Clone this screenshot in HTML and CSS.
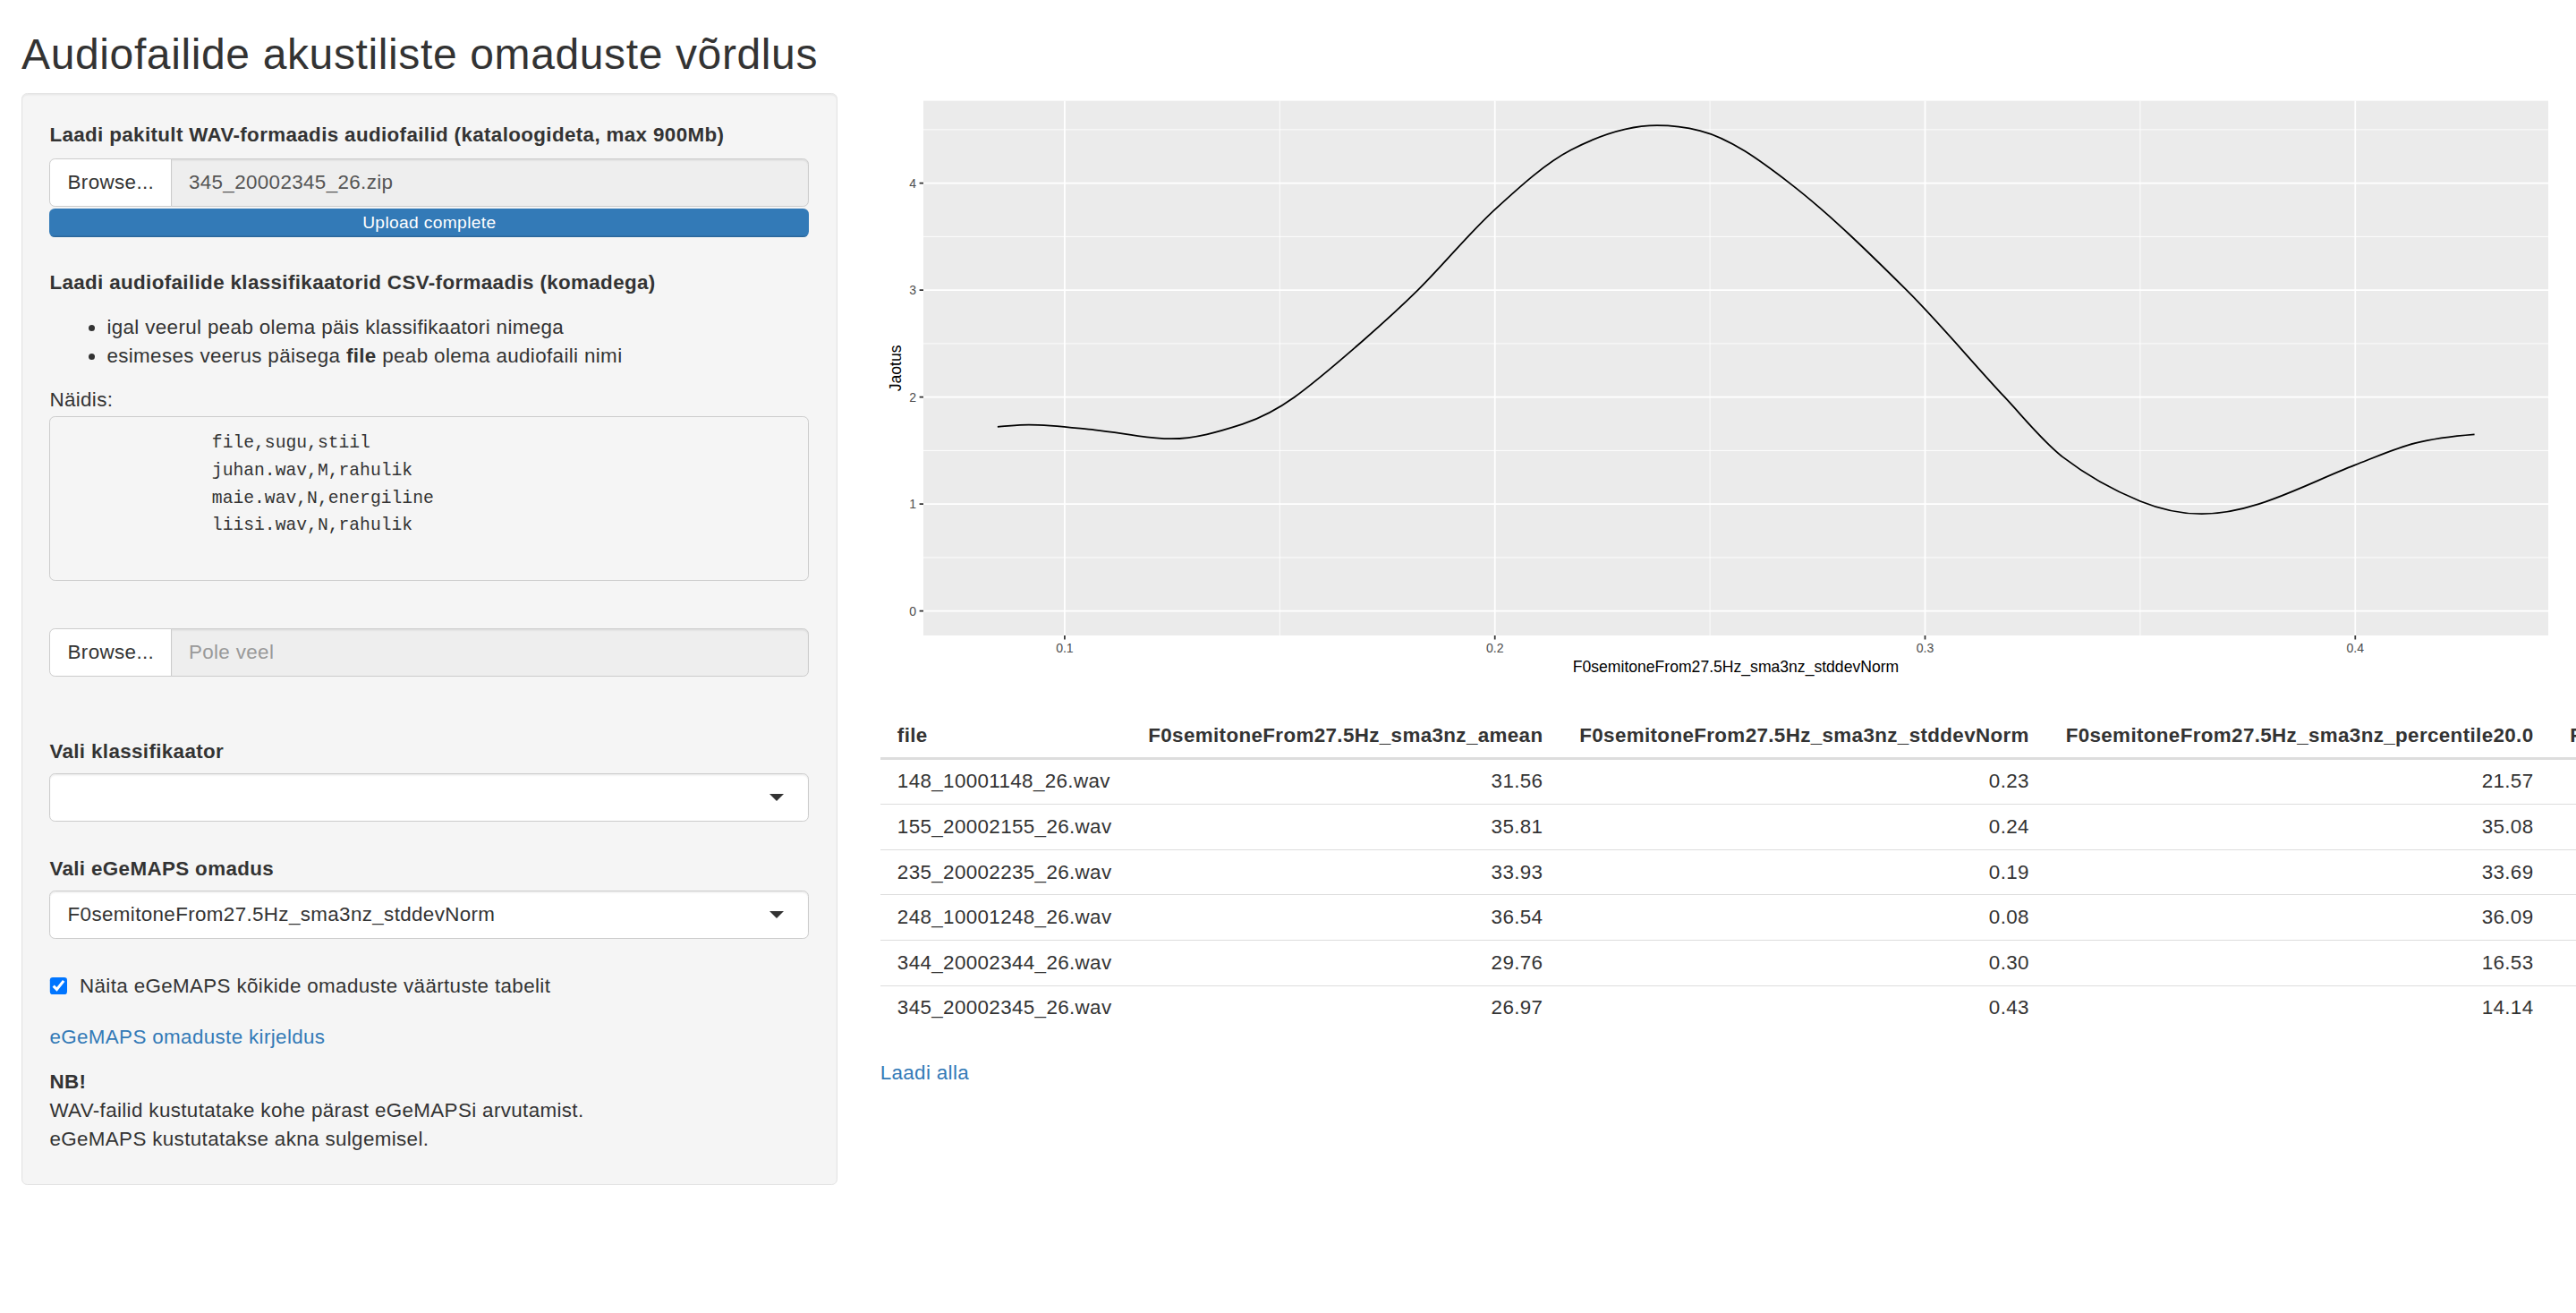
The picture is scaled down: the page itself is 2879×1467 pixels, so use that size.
FILE: index.html
```html
<!DOCTYPE html>
<html lang="et">
<head>
<meta charset="utf-8">
<title>Audiofailide akustiliste omaduste võrdlus</title>
<link rel="stylesheet" href="styles.css">
</head>
<body>
<div class="container-fluid">
  <h2 class="page-title">Audiofailide akustiliste omaduste võrdlus</h2>
  <div class="row">
    <div class="sidebar">
      <form class="well">
        <div class="form-group fg-file1">
          <label class="control-label file-label">Laadi pakitult WAV-formaadis audiofailid (kataloogideta, max 900Mb)</label>
          <div class="input-group">
            <span class="btn-file">Browse...</span>
            <input type="text" class="file-name" value="345_20002345_26.zip" readonly>
          </div>
          <div class="progress"><div class="progress-bar">Upload complete</div></div>
        </div>

        <div class="form-group fg-file2">
          <div class="csv-label">
            <p class="strong-label">Laadi audiofailide klassifikaatorid CSV-formaadis (komadega)</p>
            <ul class="rules">
              <li>igal veerul peab olema päis klassifikaatori nimega</li>
              <li>esimeses veerus päisega <b>file</b> peab olema audiofaili nimi</li>
            </ul>
            <div class="sample-label">Näidis:</div>
<pre class="sample">              file,sugu,stiil
              juhan.wav,M,rahulik
              maie.wav,N,energiline
              liisi.wav,N,rahulik
              </pre>
          </div>
          <div class="input-group">
            <span class="btn-file">Browse...</span>
            <input type="text" class="file-name" placeholder="Pole veel" readonly>
          </div>
          <div class="progress progress-hidden"><div class="progress-bar"></div></div>
        </div>

        <div class="form-group fg-select">
          <label class="control-label">Vali klassifikaator</label>
          <div class="select-box">
            <span class="select-value"></span>
            <span class="caret"></span>
          </div>
        </div>

        <div class="form-group fg-select">
          <label class="control-label">Vali eGeMAPS omadus</label>
          <div class="select-box">
            <span class="select-value">F0semitoneFrom27.5Hz_sma3nz_stddevNorm</span>
            <span class="caret"></span>
          </div>
        </div>

        <div class="checkbox">
          <label><input type="checkbox" checked><span>Näita eGeMAPS kõikide omaduste väärtuste tabelit</span></label>
        </div>

        <a class="desc-link" href="#">eGeMAPS omaduste kirjeldus</a>

        <div class="note">
          <b>NB!</b><br>
          WAV-failid kustutatake kohe pärast eGeMAPSi arvutamist.<br>
          eGeMAPS kustutatakse akna sulgemisel.
        </div>
      </form>
    </div>

    <div class="main-panel">
      <div class="plot">
        <svg class="plot-svg" viewBox="0 0 1169.6 414" width="100%" height="414">
          <rect x="30" y="5.4" width="1135" height="373.35" fill="#EBEBEB"/>
          <path d="M30 324.35H1165 M30 249.65H1165 M30 174.95H1165 M30 100.25H1165 M30 25.55H1165 M278.95 5.4V378.75 M579.45 5.4V378.75 M879.95 5.4V378.75" stroke="#FFFFFF" stroke-width="0.55" fill="none"/>
          <path d="M30 361.7H1165 M30 287H1165 M30 212.3H1165 M30 137.6H1165 M30 62.9H1165 M128.7 5.4V378.75 M429.2 5.4V378.75 M729.7 5.4V378.75 M1030.2 5.4V378.75" stroke="#FFFFFF" stroke-width="1.1" fill="none"/>
          <path d="M81.8 233.1 C89.07 232.6 96.33 231.6 103.6 231.6 C118.93 231.6 134.27 233.69 149.6 235.2 C167.43 236.96 185.27 241.4 203.1 241.4 C219.7 241.4 236.2 236.6 252.9 231.2 C265 227.1 277.1 221.0 289.2 212.3 C303.8 201.8 318.4 189.06 333 176.4 C347.13 164.15 361.27 151.57 375.4 137.6 C393.33 119.87 411.27 97.71 429.2 81.3 C446.93 65.08 464.67 48.88 482.4 39.7 C502.43 29.32 522.47 22.6 542.5 22.6 C552.5 22.6 562.5 23.8 572.5 26.3 C593.37 31.52 614.23 46.81 635.1 62.9 C662.33 83.9 689.57 110.51 716.8 137.6 C739.63 160.32 762.47 187.92 785.3 212.3 C798.9 226.82 812.5 243.86 826.1 254.3 C844.07 268.1 862.03 277.65 880 285 C894.33 290.86 908.67 293.9 923 293.9 C936.27 293.9 949.53 291.23 962.8 287 C985.17 279.86 1007.53 268.5 1029.9 259.8 C1043.93 254.34 1057.97 248.09 1072 244.5 C1085.83 240.96 1099.67 239.51 1113.5 238.4" stroke="#000000" stroke-width="1.1" fill="none"/>
          <path d="M27.25 361.7H30 M27.25 287H30 M27.25 212.3H30 M27.25 137.6H30 M27.25 62.9H30 M128.7 378.75V381.5 M429.2 378.75V381.5 M729.7 378.75V381.5 M1030.2 378.75V381.5" stroke="#333333" stroke-width="1.1" fill="none"/>
          <g class="tick-text" text-anchor="end">
            <text x="25" y="364.85">0</text>
            <text x="25" y="290.15">1</text>
            <text x="25" y="215.45">2</text>
            <text x="25" y="140.75">3</text>
            <text x="25" y="66.05">4</text>
          </g>
          <g class="tick-text" text-anchor="middle">
            <text x="128.7" y="390.65">0.1</text>
            <text x="429.2" y="390.65">0.2</text>
            <text x="729.7" y="390.65">0.3</text>
            <text x="1030.2" y="390.65">0.4</text>
          </g>
          <text class="axis-title" x="597.5" y="404.3" text-anchor="middle">F0semitoneFrom27.5Hz_sma3nz_stddevNorm</text>
          <text class="axis-title" transform="translate(14.3 192.1) rotate(-90)" text-anchor="middle">Jaotus</text>
        </svg>
      </div>

      <table class="shiny-table">
        <thead>
          <tr>
            <th>file</th>
            <th class="num">F0semitoneFrom27.5Hz_sma3nz_amean</th>
            <th class="num">F0semitoneFrom27.5Hz_sma3nz_stddevNorm</th>
            <th class="num">F0semitoneFrom27.5Hz_sma3nz_percentile20.0</th>
            <th class="num">F0semitoneFrom27.5Hz_sma3nz_percentile50.0</th>
            <th class="num">F0semitoneFrom27.5Hz_sma3nz_percentile80.0</th>
          </tr>
        </thead>
        <tbody>
          <tr><td>148_10001148_26.wav</td><td class="num">31.56</td><td class="num">0.23</td><td class="num">21.57</td><td class="num">32.49</td><td class="num">38.21</td></tr>
          <tr><td>155_20002155_26.wav</td><td class="num">35.81</td><td class="num">0.24</td><td class="num">35.08</td><td class="num">36.12</td><td class="num">40.35</td></tr>
          <tr><td>235_20002235_26.wav</td><td class="num">33.93</td><td class="num">0.19</td><td class="num">33.69</td><td class="num">34.17</td><td class="num">37.02</td></tr>
          <tr><td>248_10001248_26.wav</td><td class="num">36.54</td><td class="num">0.08</td><td class="num">36.09</td><td class="num">36.58</td><td class="num">37.44</td></tr>
          <tr><td>344_20002344_26.wav</td><td class="num">29.76</td><td class="num">0.30</td><td class="num">16.53</td><td class="num">31.86</td><td class="num">35.90</td></tr>
          <tr><td>345_20002345_26.wav</td><td class="num">26.97</td><td class="num">0.43</td><td class="num">14.14</td><td class="num">27.33</td><td class="num">36.71</td></tr>
        </tbody>
      </table>

      <a class="download-link" href="#">Laadi alla</a>
    </div>
  </div>
</div>
</body>
</html>
```

FILE: styles.css
```css
* {
  box-sizing: border-box;
}

html {
  zoom: 1.6;
}

body {
  margin: 0;
  font-family: "Liberation Sans", Arial, Helvetica, sans-serif;
  font-size: 14px;
  line-height: 20px;
  letter-spacing: 0.016em;
  color: #333333;
  background: #ffffff;
  overflow-x: hidden;
}

a {
  color: #337ab7;
  text-decoration: none;
}

.container-fluid {
  padding: 0 15px;
}

.page-title {
  font-size: 30px;
  font-weight: 500;
  line-height: 33px;
  letter-spacing: 0.013em;
  margin: 22px 0 10px;
}

.row {
  display: flex;
  align-items: flex-start;
  margin: 0 -15px;
}

.sidebar {
  flex: 0 0 33.33333%;
  padding: 0 15px;
}

.main-panel {
  flex: 0 0 66.66667%;
  min-width: 0;
  padding: 0 15px;
}

/* sidebar well */
.well {
  display: flex;
  flex-direction: column;
  background: #f5f5f5;
  border: 1px solid #e3e3e3;
  border-radius: 4px;
  box-shadow: inset 0 1px 1px rgba(0, 0, 0, 0.05);
  padding: 19px 19px 21px;
  margin: 0 0 20px;
}

.form-group {
  margin-bottom: 15px;
}

.control-label {
  display: block;
  font-weight: 700;
  margin-bottom: 5px;
}

.file-label {
  margin-bottom: 6px;
}

.input-group {
  display: flex;
  height: 34px;
}

.btn-file {
  flex: none;
  height: 34px;
  padding: 6px 12px;
  border: 1px solid #cccccc;
  border-radius: 4px 0 0 4px;
  background: #ffffff;
  color: #333333;
  line-height: 20px;
  margin-right: -1px;
}

.file-name {
  flex: 1;
  min-width: 0;
  height: 34px;
  margin: 0;
  padding: 6px 12px;
  border: 1px solid #cccccc;
  border-radius: 0 4px 4px 0;
  background: #eeeeee;
  color: #555555;
  font: inherit;
  letter-spacing: inherit;
  line-height: 20px;
  box-shadow: inset 0 1px 1px rgba(0, 0, 0, 0.075);
  outline: none;
}

.file-name::placeholder {
  color: #999999;
  opacity: 1;
}

.progress {
  height: 20px;
  margin: 1px 0 7px;
  background: #f5f5f5;
  border-radius: 4px;
  overflow: hidden;
  box-shadow: inset 0 1px 2px rgba(0, 0, 0, 0.1);
}

.progress-bar {
  width: 100%;
  height: 100%;
  background: #337ab7;
  color: #ffffff;
  font-size: 12px;
  line-height: 20px;
  text-align: center;
  box-shadow: inset 0 -1px 0 rgba(0, 0, 0, 0.15);
}

.progress-hidden {
  visibility: hidden;
  margin-bottom: 6px;
}

.strong-label {
  font-weight: 700;
  margin: 0 0 11px;
}

.rules {
  margin: 0 0 11px;
  padding-left: 40px;
}

.sample-label {
  margin: 0;
}

.sample {
  margin: 1px 0 33px;
  padding: 9px 9.5px;
  font-family: "Liberation Mono", "DejaVu Sans Mono", monospace;
  font-size: 12.3px;
  line-height: 19.2px;
  letter-spacing: 0;
  color: #333333;
  background: #f5f5f5;
  border: 1px solid #cccccc;
  border-radius: 4px;
  white-space: pre;
  overflow: hidden;
}

.fg-select {
  margin-bottom: 23px;
}

.select-box {
  display: flex;
  align-items: center;
  height: 34px;
  padding: 6px 12px;
  border: 1px solid #cccccc;
  border-radius: 4px;
  background: #ffffff;
  color: #333333;
  box-shadow: inset 0 1px 1px rgba(0, 0, 0, 0.075);
}

.select-value {
  flex: 1;
  min-width: 0;
  white-space: nowrap;
  overflow: hidden;
}

.caret {
  flex: none;
  width: 0;
  height: 0;
  border-style: solid;
  border-width: 5px 5px 0 5px;
  border-color: #333333 transparent transparent transparent;
  margin: 0 5px 0 0;
}

.checkbox label {
  display: flex;
  align-items: center;
  font-weight: 400;
  line-height: 20px;
}

.checkbox input {
  flex: none;
  width: 13px;
  height: 13px;
  margin: 0 8px 0 0;
}

.desc-link {
  display: block;
  align-self: flex-start;
  margin-top: 15.5px;
}

.note {
  margin-top: 11.5px;
}

/* plot */
.plot {
  height: 414px;
}

.plot-svg {
  display: block;
  letter-spacing: 0;
}

.plot-svg text {
  font-family: "Liberation Sans", Arial, Helvetica, sans-serif;
}

.tick-text {
  font-size: 8.8px;
  fill: #4d4d4d;
}

.axis-title {
  font-size: 11px;
  fill: #000000;
}

/* table */
.shiny-table {
  border-collapse: collapse;
  border-spacing: 0;
  margin: 19.5px 0 20px;
}

.shiny-table th,
.shiny-table td {
  padding: 5.5px 12px;
  line-height: 20px;
  white-space: nowrap;
  text-align: left;
  vertical-align: top;
}

.shiny-table th {
  padding: 5px 12px;
  font-weight: 700;
  border-bottom: 2px solid #dddddd;
  vertical-align: bottom;
}

.shiny-table td {
  border-top: 1px solid #dddddd;
}

.shiny-table th + th {
  padding-left: 13.5px;
}

.shiny-table .num {
  text-align: right;
}

.download-link {
  display: inline-block;
}
```
